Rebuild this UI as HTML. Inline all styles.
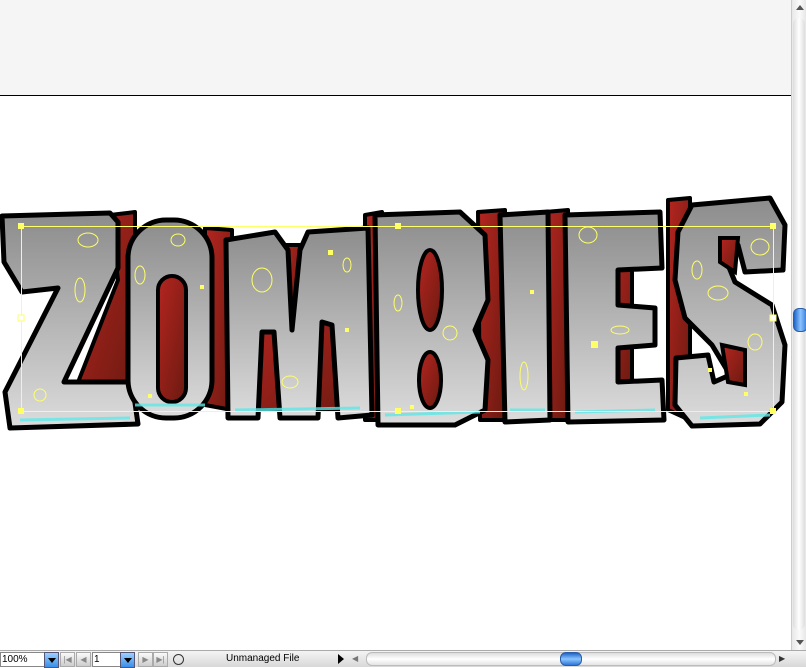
<!DOCTYPE html>
<html><head><meta charset="utf-8"><style>
html,body{margin:0;padding:0;width:806px;height:666px;overflow:hidden;background:#fff;font-family:"Liberation Sans",sans-serif}
#top{position:absolute;left:0;top:0;width:791px;height:95px;background:#f5f5f5;border-bottom:1px solid #000}
#vs{position:absolute;left:791px;top:0;width:15px;height:650px;background:linear-gradient(90deg,#e8e8e8,#fafafa 50%,#e4e4e4);border-left:1px solid #ccc}
#bb{position:absolute;left:0;top:650px;width:806px;height:16px;background:linear-gradient(#f4f4f4,#d8d8d8);border-top:1px solid #aaa}
.f{position:absolute;top:1px;height:13px;background:#fff;border:1px solid #888;font-size:10px;line-height:13px;padding-left:1px}
.bl{position:absolute;top:1px;width:13px;height:14px;background:linear-gradient(#9cd0ff,#3a8ee8);border:1px solid #557}
.bl:after{content:"";position:absolute;left:3px;top:5px;border:4px solid transparent;border-top:5px solid #000;border-bottom:0}
.nb{position:absolute;top:1px;width:13px;height:13px;background:linear-gradient(#fafafa,#ccc);border:1px solid #aaa;font-size:8px;color:#888;text-align:center;line-height:13px}
</style></head><body>
<div id="top"></div>
<div id="vs">
 <div style="position:absolute;left:4px;top:5px;border:4px solid transparent;border-bottom:5px solid #555;border-top:0"></div>
 <div style="position:absolute;left:1px;top:18px;width:12px;height:612px;border-radius:6px;background:linear-gradient(90deg,#ddd,#fff 50%,#ddd)"></div>
 <div style="position:absolute;left:1px;top:308px;width:13px;height:22px;border-radius:6px;background:linear-gradient(90deg,#1d63c8,#8cc4ff 50%,#2f78d8);border:1px solid #2a5ea8"></div>
 <div style="position:absolute;left:4px;top:640px;border:4px solid transparent;border-top:5px solid #555;border-bottom:0"></div>
</div>
<svg width="806" height="666" style="position:absolute;left:0;top:0" xmlns="http://www.w3.org/2000/svg">
<defs><linearGradient id="g" x1="0" y1="0" x2="0" y2="1"><stop offset="0" stop-color="#8c8c8c"/><stop offset="1" stop-color="#dcdcdc"/></linearGradient>
<linearGradient id="r" x1="0" y1="0" x2="1" y2="1"><stop offset="0" stop-color="#b52520"/><stop offset="1" stop-color="#6a1a10"/></linearGradient></defs>
<g fill="url(#r)" stroke="#000" stroke-width="4" stroke-linejoin="round">
<path d="M110,215 L135,212 L135,405 L75,390 L118,280 Z"/>
<path d="M205,228 L232,230 L232,410 L205,405 Z"/>
<path d="M250,320 L295,320 L340,310 L370,320 L370,410 L250,410 Z"/>
<path d="M280,245 L300,245 L295,340 L285,340 Z"/>
<path d="M365,215 L382,212 L382,420 L365,420 Z"/>
<path d="M478,212 L505,210 L505,420 L480,420 Z"/>
<path d="M545,212 L568,210 L568,420 L548,420 Z"/>
<path d="M605,262 L632,262 L632,392 L605,392 Z"/>
<path d="M668,200 L690,198 L690,420 L668,410 Z"/>
</g>
<g fill="url(#g)" stroke="#000" stroke-width="5" stroke-linejoin="round">
<path d="M2,216 L110,213 L118,222 L118,268 L64,382 L132,382 L138,424 L10,428 L5,392 L58,288 L22,292 L4,262 Z"/>
<rect x="128" y="220" width="84" height="198" rx="38"/>
<path d="M226,240 L275,232 L288,250 L292,330 L300,250 L308,232 L368,228 L372,415 L338,418 L332,325 L322,322 L318,418 L280,418 L274,332 L262,332 L258,418 L228,418 Z"/>
<path d="M375,215 L460,212 L485,235 L488,300 L475,330 L488,360 L485,410 L455,425 L378,425 Z"/>
<path d="M500,215 L548,212 L550,420 L505,422 Z"/>
<path d="M565,215 L660,212 L662,268 L618,270 L618,305 L655,308 L655,345 L618,348 L618,382 L662,380 L664,420 L568,422 Z"/>
<path d="M692,205 L770,198 L785,225 L783,270 L745,272 L738,245 L722,250 L735,282 L772,305 L785,345 L782,402 L760,424 L692,426 L675,405 L676,358 L708,355 L714,382 L730,375 L712,345 L685,318 L675,280 L678,232 Z"/>
</g>
<g fill="url(#r)" stroke="#000" stroke-width="4">
<rect x="158" y="276" width="28" height="126" rx="14"/>
<ellipse cx="430" cy="290" rx="12" ry="40"/>
<ellipse cx="430" cy="380" rx="11" ry="28"/>
<path d="M720,238 L738,238 L735,272 L720,262 Z"/>
<path d="M722,345 L745,350 L745,385 L728,382 Z"/>
</g>
<g fill="none" stroke="#60e8e8" stroke-width="3" opacity=".8">
<path d="M20,420 L130,418"/><path d="M135,405 L205,405"/><path d="M235,410 L360,408"/><path d="M385,415 L480,412"/><path d="M510,410 L545,410"/><path d="M575,412 L655,410"/><path d="M700,418 L770,415"/>
</g>
<g fill="none" stroke="#ffff66" stroke-width="1">
<rect x="21.5" y="226.5" width="752" height="185"/>
<ellipse cx="88" cy="240" rx="10" ry="7"/><ellipse cx="80" cy="290" rx="5" ry="12"/><ellipse cx="178" cy="240" rx="7" ry="6"/><ellipse cx="140" cy="275" rx="5" ry="9"/><ellipse cx="262" cy="280" rx="10" ry="12"/><ellipse cx="290" cy="382" rx="8" ry="6"/><ellipse cx="347" cy="265" rx="4" ry="7"/><ellipse cx="398" cy="303" rx="4" ry="8"/><ellipse cx="450" cy="333" rx="7" ry="7"/><ellipse cx="524" cy="376" rx="4" ry="14"/><ellipse cx="588" cy="235" rx="9" ry="8"/><ellipse cx="620" cy="330" rx="9" ry="4"/><ellipse cx="697" cy="270" rx="5" ry="9"/><ellipse cx="718" cy="293" rx="10" ry="7"/><ellipse cx="760" cy="247" rx="9" ry="8"/><ellipse cx="755" cy="342" rx="7" ry="8"/><ellipse cx="40" cy="395" rx="6" ry="6"/>
</g>
<g fill="#ffff66">
<rect x="18" y="223" width="6" height="6"/><rect x="395" y="223" width="6" height="6"/><rect x="770" y="223" width="6" height="6"/><rect x="18" y="408" width="6" height="6"/><rect x="395" y="408" width="6" height="6"/><rect x="770" y="408" width="6" height="6"/><rect x="770" y="315" width="6" height="6" fill="#fff" stroke="#ffff66"/><rect x="18" y="315" width="6" height="6" fill="#fff" stroke="#ffff66"/>
<rect x="591" y="341" width="7" height="7"/><rect x="328" y="250" width="5" height="5"/><rect x="148" y="394" width="4" height="4"/><rect x="410" y="405" width="4" height="4"/><rect x="744" y="392" width="4" height="4"/><rect x="708" y="368" width="4" height="4"/><rect x="200" y="285" width="4" height="4"/><rect x="345" y="328" width="4" height="4"/><rect x="530" y="290" width="4" height="4"/>
</g>
</svg>
<div id="bb">
 <div class="f" style="left:0;width:42px">100%</div>
 <div class="bl" style="left:44px"></div>
 <div class="nb" style="left:60px">|◀</div><div class="nb" style="left:76px">◀</div>
 <div class="f" style="left:92px;width:26px">1</div>
 <div class="bl" style="left:120px"></div>
 <div class="nb" style="left:138px">▶</div><div class="nb" style="left:153px">▶|</div>
 <div style="position:absolute;left:173px;top:3px;width:9px;height:9px;border:1px solid #333;border-radius:50%"></div>
 <div style="position:absolute;left:226px;top:2px;font-size:10px">Unmanaged File</div>
 <div style="position:absolute;left:338px;top:3px;border:5px solid transparent;border-left:6px solid #000;border-right:0"></div>
 <div style="position:absolute;left:352px;top:3px;font-size:8px;color:#777">◀</div>
 <div style="position:absolute;left:366px;top:1px;width:408px;height:12px;border-radius:6px;background:linear-gradient(#ddd,#fff 50%,#e4e4e4);border:1px solid #bbb"></div>
 <div style="position:absolute;left:560px;top:1px;width:20px;height:12px;border-radius:6px;background:linear-gradient(#1d63c8,#8cc4ff 50%,#2f78d8);border:1px solid #2a5ea8"></div>
 <div style="position:absolute;left:779px;top:3px;font-size:8px;color:#333">▶</div>
</div>
</body></html>
